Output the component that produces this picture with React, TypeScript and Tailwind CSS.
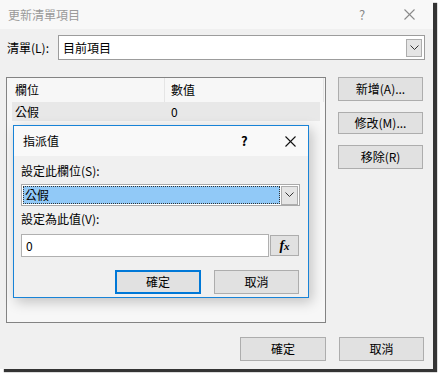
import React from 'react'

const font = "font-['Noto_Sans_CJK_TC','Noto_Sans',sans-serif]"

function Chevron() {
  return (
    <svg width="9" height="6" viewBox="0 0 9 6">
      <polyline points="0.5,0.5 4.5,4.5 8.5,0.5" fill="none" stroke="#333" strokeWidth="1" />
    </svg>
  )
}

function CloseIcon({ color }: { color: string }) {
  return (
    <svg width="11" height="11" viewBox="0 0 11 11">
      <line x1="0.5" y1="0.5" x2="10.5" y2="10.5" stroke={color} strokeWidth="1.1" />
      <line x1="10.5" y1="0.5" x2="0.5" y2="10.5" stroke={color} strokeWidth="1.1" />
    </svg>
  )
}

function Btn({ label, className = '' }: { label: string; className?: string }) {
  return (
    <button
      className={`h-[24px] bg-[#e1e1e1] border border-[#adadad] text-[12px] text-black flex items-center justify-center ${className}`}
    >
      {label}
    </button>
  )
}

export default function App() {
  return (
    <div className={`w-[438px] h-[373px] bg-white relative ${font}`}>
      {/* Outer window */}
      <div className="w-[433px] h-[369px] bg-[#f0f0f0] shadow-[4px_3px_1px_rgba(30,30,30,0.9)] flex flex-col">
        {/* Title bar */}
        <div className="h-[29px] bg-[#f8f8f8] flex items-center pl-[8px] text-[12px] text-[#9a9a9a]">
          <span className="flex-1">更新清單項目</span>
          <span className="w-[14px] text-[13px] text-[#888] mr-[31px]">?</span>
          <span className="mr-[18px] flex items-center">
            <CloseIcon color="#8a8a8a" />
          </span>
        </div>

        {/* List row */}
        <div className="flex items-center mt-[6px] pl-[7px] h-[25px]">
          <span className="w-[51px] text-[12px] text-black">清單(L):</span>
          <div className="w-[367px] h-[25px] border border-[#9c9c9c] bg-white flex items-center pl-[4px] pr-[2px]">
            <span className="flex-1 text-[12px] text-black">目前項目</span>
            <div className="w-[16px] h-[18px] border border-[#adadad] bg-[#e5e5e5] flex items-center justify-center">
              <Chevron />
            </div>
          </div>
        </div>

        {/* Main area */}
        <div className="flex mt-[17px] pl-[6px]">
          <div className="w-[320px] h-[246px] border border-[#838383] bg-[#f7f7f7] flex flex-col">
            <div className="h-[24px] flex text-[12px] text-black">
              <div className="w-[158px] border-r border-[#e5e5e5] pl-[8px] flex items-center">欄位</div>
              <div className="flex-1 pl-[6px] flex items-center border-r border-[#e5e5e5] mr-[1px]">數值</div>
            </div>
            <div className="h-[19px] flex text-[12px] text-black bg-[#e8e8e8] mx-[5px]">
              <div className="w-[153px] pl-[3px] flex items-center">公假</div>
              <div className="flex-1 pl-[6px] flex items-center">0</div>
            </div>
          </div>
          <div className="flex flex-col ml-[12px] gap-[11px]">
            <Btn label="新增(A)..." className="w-[85px]" />
            <Btn label="修改(M)..." className="w-[85px] !h-[22px]" />
            <Btn label="移除(R)" className="w-[85px]" />
          </div>
        </div>

        {/* Bottom buttons */}
        <div className="flex justify-end gap-[13px] mt-[14px] pr-[9px]">
          <Btn label="確定" className="w-[86px]" />
          <Btn label="取消" className="w-[85px]" />
        </div>
      </div>

      {/* Assign value dialog */}
      <div className="absolute left-[13px] top-[125px] w-[296px] h-[173px] border border-[#1883d7] bg-[#f0f0f0] shadow-[3px_4px_12px_rgba(0,0,0,0.22)] flex flex-col">
        <div className="h-[30px] bg-[#f9f9f9] flex items-center pl-[9px] text-[12px] text-black">
          <span className="flex-1">指派值</span>
          <span className="text-[13px] font-semibold w-[10px] mr-[34px]">?</span>
          <span className="mr-[12px] flex items-center">
            <CloseIcon color="#111" />
          </span>
        </div>
        <div className="flex flex-col pl-[7px] pr-[8px]">
          <span className="text-[12px] text-black mt-[7px] h-[16px] leading-[16px]">設定此欄位(S):</span>
          <div className="mt-[5px] w-[279px] h-[22px] border border-[#a9a9a9] bg-white flex items-center p-[1px]">
            <div className="flex-1 h-full bg-[#91c9f7] border border-dotted border-[#333] flex items-center pl-[1px] text-[12px] text-black">
              公假
            </div>
            <div className="w-[17px] h-[19px] ml-[1px] border border-[#adadad] bg-[#e5e5e5] flex items-center justify-center">
              <Chevron />
            </div>
          </div>
          <span className="text-[12px] text-black mt-[5px] h-[16px] leading-[16px]">設定為此值(V):</span>
          <div className="flex mt-[7px] items-center">
            <div className="w-[248px] h-[23px] border border-[#b0b0b0] bg-white flex items-center pl-[4px] text-[12px] text-black">
              0
            </div>
            <div className="w-[29px] h-[21px] ml-[1px] border border-[#adadad] bg-[#e1e1e1] flex items-center justify-center">
              <span className="font-['Liberation_Serif',serif] italic font-bold text-[14px] leading-none text-black">
                f<span className="text-[11px]">x</span>
              </span>
            </div>
          </div>
          <div className="flex mt-[13px] pl-[94px] gap-[13px]">
            <button className="w-[86px] h-[24px] bg-[#e1e1e1] border-2 border-[#0078d7] text-[12px] text-black flex items-center justify-center">
              確定
            </button>
            <Btn label="取消" className="w-[85px]" />
          </div>
        </div>
      </div>
    </div>
  )
}
